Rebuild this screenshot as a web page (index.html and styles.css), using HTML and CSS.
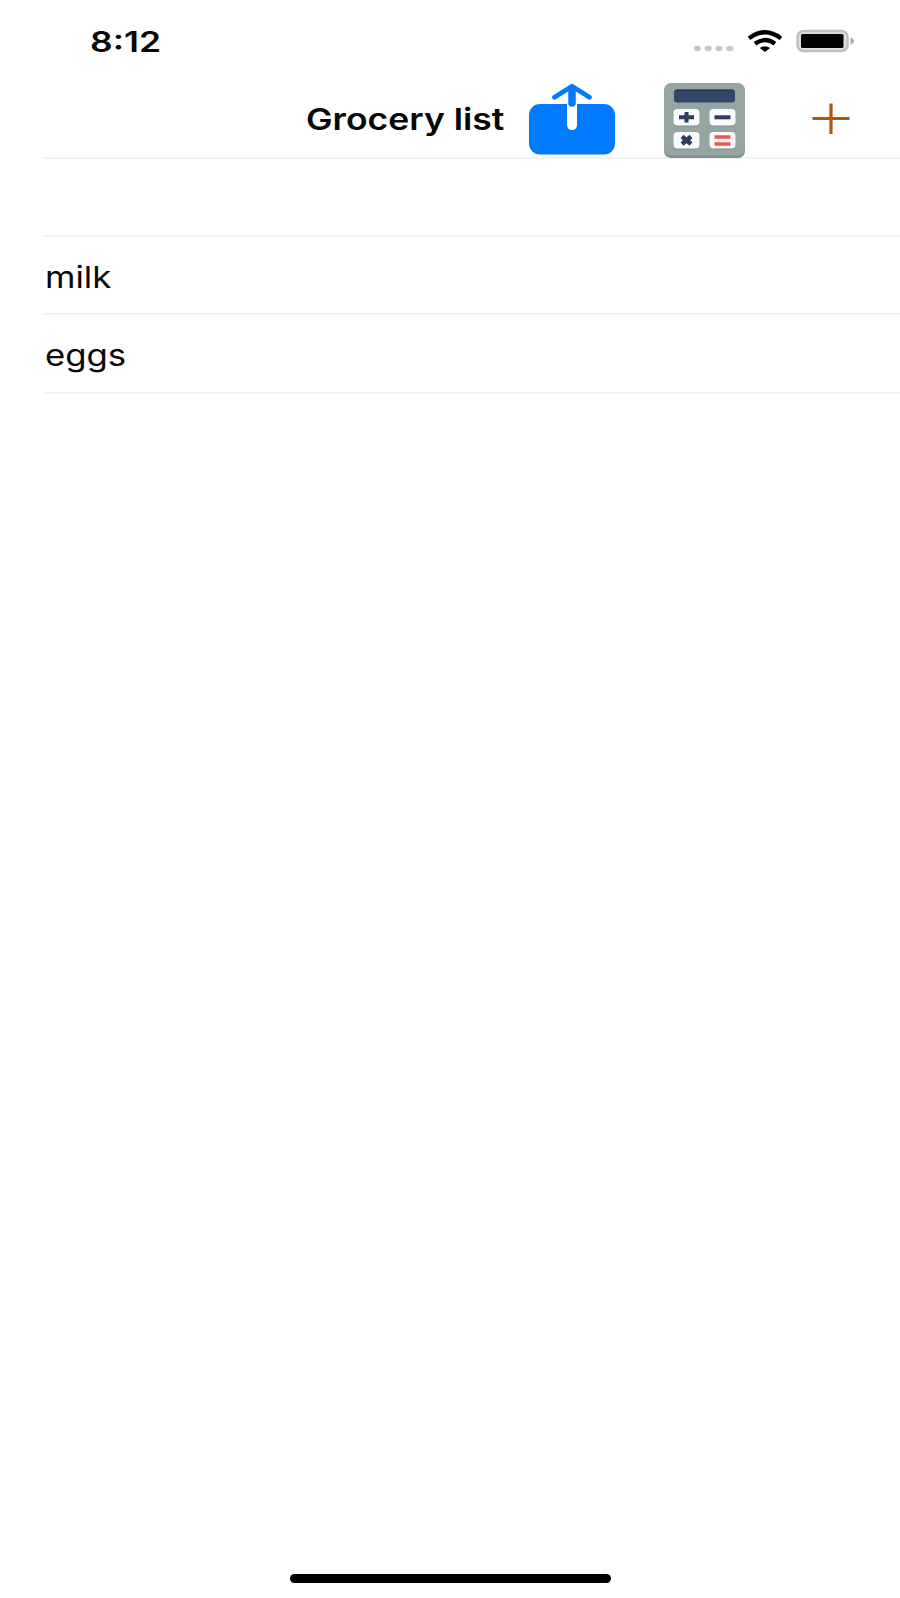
FILE: index.html
```
<!DOCTYPE html>
<html lang="en">
<head>
<meta charset="utf-8">
<title>Grocery list</title>
<link rel="stylesheet" href="styles.css">
</head>
<body>
<div class="screen">
  <header class="status">
    <span class="time">8:12</span>
    <svg class="dots" viewBox="0 0 42 8"><g fill="#c8c8c8"><ellipse cx="5.300" cy="4.500" rx="3.600" ry="2.800"/><ellipse cx="16.200" cy="4.500" rx="3.600" ry="2.800"/><ellipse cx="27" cy="4.500" rx="3.600" ry="2.800"/><ellipse cx="37.800" cy="4.500" rx="3.600" ry="2.800"/></g></svg>
    <svg class="wifi" viewBox="0 0 36 22"><g fill="none" stroke="#000" stroke-width="4.200"><path d="M2 8.300Q18-3.800 34 8.300"/><path d="M8 13.700Q18 6.300 28 13.700"/></g><path d="M12.800 18Q18 14.300 23.200 18L18 22Z"/></svg>
    <svg class="battery" viewBox="0 0 62 26"><rect x="2.500" y="3" width="50" height="20" rx="6" fill="#e0e0e0" stroke="#c0c0c0" stroke-width="2.500"/><rect x="6" y="6" width="42.500" height="14" rx="1.500"/><path d="M55.500 9.500Q59 11 59 13T55.500 16.500Z" fill="#aaa"/></svg>
  </header>
  <nav class="nav">
    <h1 class="title">Grocery list</h1>
    <svg class="share" viewBox="0 0 88 76"><rect x="1" y="21" width="86" height="50.500" rx="11" fill="#007aff"/><path d="M44 20V42" stroke="#fff" stroke-width="10"/><path d="M44 42V42.100" stroke="#fff" stroke-width="10" stroke-linecap="round"/><path d="M26.500 14.200L44 3.300L61.500 14.200" fill="none" stroke="#007aff" stroke-width="4.800" stroke-linecap="round" stroke-linejoin="round"/><path d="M44 6V20" stroke="#007aff" stroke-width="7.500" stroke-linecap="round"/></svg>
    <svg class="calc" viewBox="0 0 82 76">
      <rect x="1" y="2" width="81" height="73" rx="7" fill="#7f8f8d"/><rect x="1" y="0" width="81" height="72.500" rx="7" fill="#95a5a2"/>
      <rect x="11" y="6.500" width="61" height="13" rx="3" fill="#34466a"/><path d="M13 7.500H70" stroke="#2c3c5c" stroke-width="2"/>
      <g fill="#7f8f8d"><rect x="10.500" y="28" width="26" height="15.500" rx="4"/><rect x="46.500" y="28" width="26" height="15.500" rx="4"/><rect x="10.500" y="51" width="26" height="15.500" rx="4"/><rect x="46.500" y="51" width="26" height="15.500" rx="4"/></g>
      <g fill="#fbfbfd"><rect x="10.500" y="26" width="26" height="16.500" rx="4"/><rect x="46.500" y="26" width="26" height="16.500" rx="4"/><rect x="10.500" y="49" width="26" height="16.500" rx="4"/><rect x="46.500" y="49" width="26" height="16.500" rx="4"/></g>
      <g fill="none" stroke="#2e3c5e" stroke-width="4"><path d="M16 34.300H31M23.500 29V39.500"/><path d="M51.500 34.300H67.500"/><path d="M19 53.500L28 61M28 53.500L19 61" stroke-width="4.500"/></g>
      <path d="M51.500 54H67.500M51.500 61H67.500" stroke="#f0554c" stroke-width="3.500"/>
    </svg>
    <svg class="plus" viewBox="0 0 40 34"><path d="M1.500 16.500H38.500M20 1.500V32" stroke="#a85c12" stroke-width="3.200"/></svg>
  </nav>
  <ul class="list">
    <li class="row"></li>
    <li class="row"><span class="item">milk</span></li>
    <li class="row"><span class="item">eggs</span></li>
  </ul>
  <div class="home"></div>
</div>
</body>
</html>
```
FILE: styles.css
```
* { box-sizing: border-box; }
body { margin: 0; background: #fff; color: #080808; font-family: Inter, "Liberation Sans", sans-serif; }
svg { display: block; flex: none; }
.screen { width: 900px; height: 1598px; display: flex; flex-direction: column; overflow: hidden; background: #fff; }
.status { height: 72px; display: flex; align-items: flex-start; padding-left: 90px; }
.time { width: 602px; padding-top: 25px; font-size: 28px; line-height: 35px; font-weight: 600; transform: scaleX(1.265); transform-origin: left; }
.dots { width: 42px; height: 8px; margin-top: 44px; }
.wifi { width: 36px; height: 22px; margin: 30px 0 0 13px; }
.battery { width: 62px; height: 26px; margin: 28px 0 0 12px; }
.nav { height: 85px; display: flex; align-items: flex-start; padding-left: 306px; }
.title { width: 222px; margin: 29px 0 0; font-size: 30px; line-height: 36px; font-weight: 600; white-space: nowrap; transform: scaleX(1.184); transform-origin: left; }
.share { width: 88px; height: 76px; margin-top: 11px; }
.calc { width: 82px; height: 76px; margin: 11px 0 0 47px; position: relative; }
.plus { width: 40px; height: 34px; margin: 30px 0 0 66px; }
.list { list-style: none; margin: 0 0 0 44px; padding: 0; border-top: 2px solid #f2f2f2; }
.row { height: 78.200px; border-bottom: 2px solid #f2f2f2; padding-top: 21.500px; }
.item { display: block; width: 200px; margin-left: .5px; font-size: 30px; line-height: 36px; transform: scaleX(1.158); transform-origin: left; }
.home { width: 321px; height: 9px; border-radius: 5px; background: #000; margin: auto 0 15px 290px; }
```
